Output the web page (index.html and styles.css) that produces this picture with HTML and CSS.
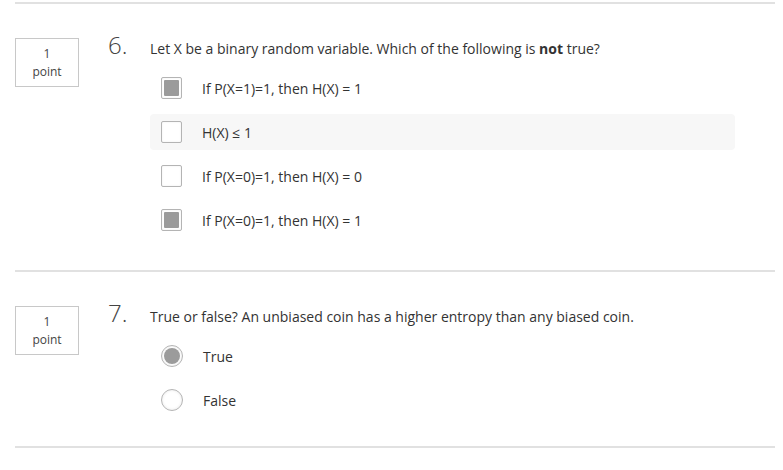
FILE: index.html
```html
<!DOCTYPE html>
<html>
<head>
<meta charset="utf-8">
<link rel="stylesheet" href="styles.css">
</head>
<body>
<div class="page">
  <div class="question q-first">
    <div class="points"><div>1</div><div>point</div></div>
    <div class="body">
      <div class="header">
        <span class="num">6.</span>
        <span class="prompt">Let X be a binary random variable. Which of the following is <b>not</b> true?</span>
      </div>
      <div class="options">
        <div class="option"><span class="box checked"></span><span class="label">If P(X=1)=1, then H(X) = 1</span></div>
        <div class="option hover"><span class="box"></span><span class="label">H(X) ≤ 1</span></div>
        <div class="option"><span class="box"></span><span class="label">If P(X=0)=1, then H(X) = 0</span></div>
        <div class="option"><span class="box checked"></span><span class="label">If P(X=0)=1, then H(X) = 1</span></div>
      </div>
    </div>
  </div>
  <div class="question q-last">
    <div class="points"><div>1</div><div>point</div></div>
    <div class="body">
      <div class="header">
        <span class="num">7.</span>
        <span class="prompt">True or false? An unbiased coin has a higher entropy than any biased coin.</span>
      </div>
      <div class="options">
        <div class="option"><span class="box radio checked"></span><span class="label">True</span></div>
        <div class="option"><span class="box radio"></span><span class="label">False</span></div>
      </div>
    </div>
  </div>
</div>
</body>
</html>
```

FILE: styles.css
```css
* { box-sizing: border-box; }
html, body { margin: 0; padding: 0; background: #fff; }
body {
  font-family: "Open Sans", "Liberation Sans", sans-serif;
  color: #333;
}
.page {
  padding: 2px 8px 0 15px;
  width: 783px;
}
.question {
  display: flex;
  border-top: 2px solid #e1e1e1;
  padding-top: 29px;
}
.q-first { padding-bottom: 32px; }
.q-last { padding-bottom: 28px; border-bottom: 2px solid #e1e1e1; }
.points {
  width: 64px;
  height: 49px;
  margin-top: 5px;
  border: 1px solid #c8c8c8;
  font-size: 12px;
  line-height: 18px;
  text-align: center;
  padding-top: 6px;
  color: #444;
  flex: none;
}
.body {
  margin-left: 29px;
  width: 627px;
}
.header {
  display: flex;
  align-items: baseline;
  height: 24px;
}
.num {
  width: 42px;
  flex: none;
  font-size: 24px;
  line-height: 24px;
  font-weight: 300;
  color: #444;
}
.prompt {
  font-size: 14px;
  line-height: 20px;
}
.prompt b { font-weight: 700; }
.options {
  margin-top: 13px;
  margin-left: 42px;
  width: 585px;
  display: flex;
  flex-direction: column;
  gap: 8px;
}
.option {
  height: 36px;
  display: flex;
  align-items: center;
  padding-left: 11px;
  border-radius: 4px;
  font-size: 14px;
}
.option.hover { background: #f7f7f7; }
.box {
  width: 21px;
  height: 22px;
  border: 1px solid #b4b4b4;
  border-radius: 2px;
  background: #fff;
  box-shadow: inset 0 0 2px rgba(0,0,0,0.08);
  flex: none;
  position: relative;
}
.box.checked::after {
  content: "";
  position: absolute;
  left: 2px; top: 2px; right: 2px; bottom: 2px;
  background: #9b9b9b;
  border-radius: 1px;
}
.box.radio {
  width: 22px;
  border-radius: 50%;
  box-shadow: inset 0 0 3px rgba(0,0,0,0.1);
}
.box.radio.checked::after { border-radius: 50%; }
.label {
  margin-left: 20px;
}
```
